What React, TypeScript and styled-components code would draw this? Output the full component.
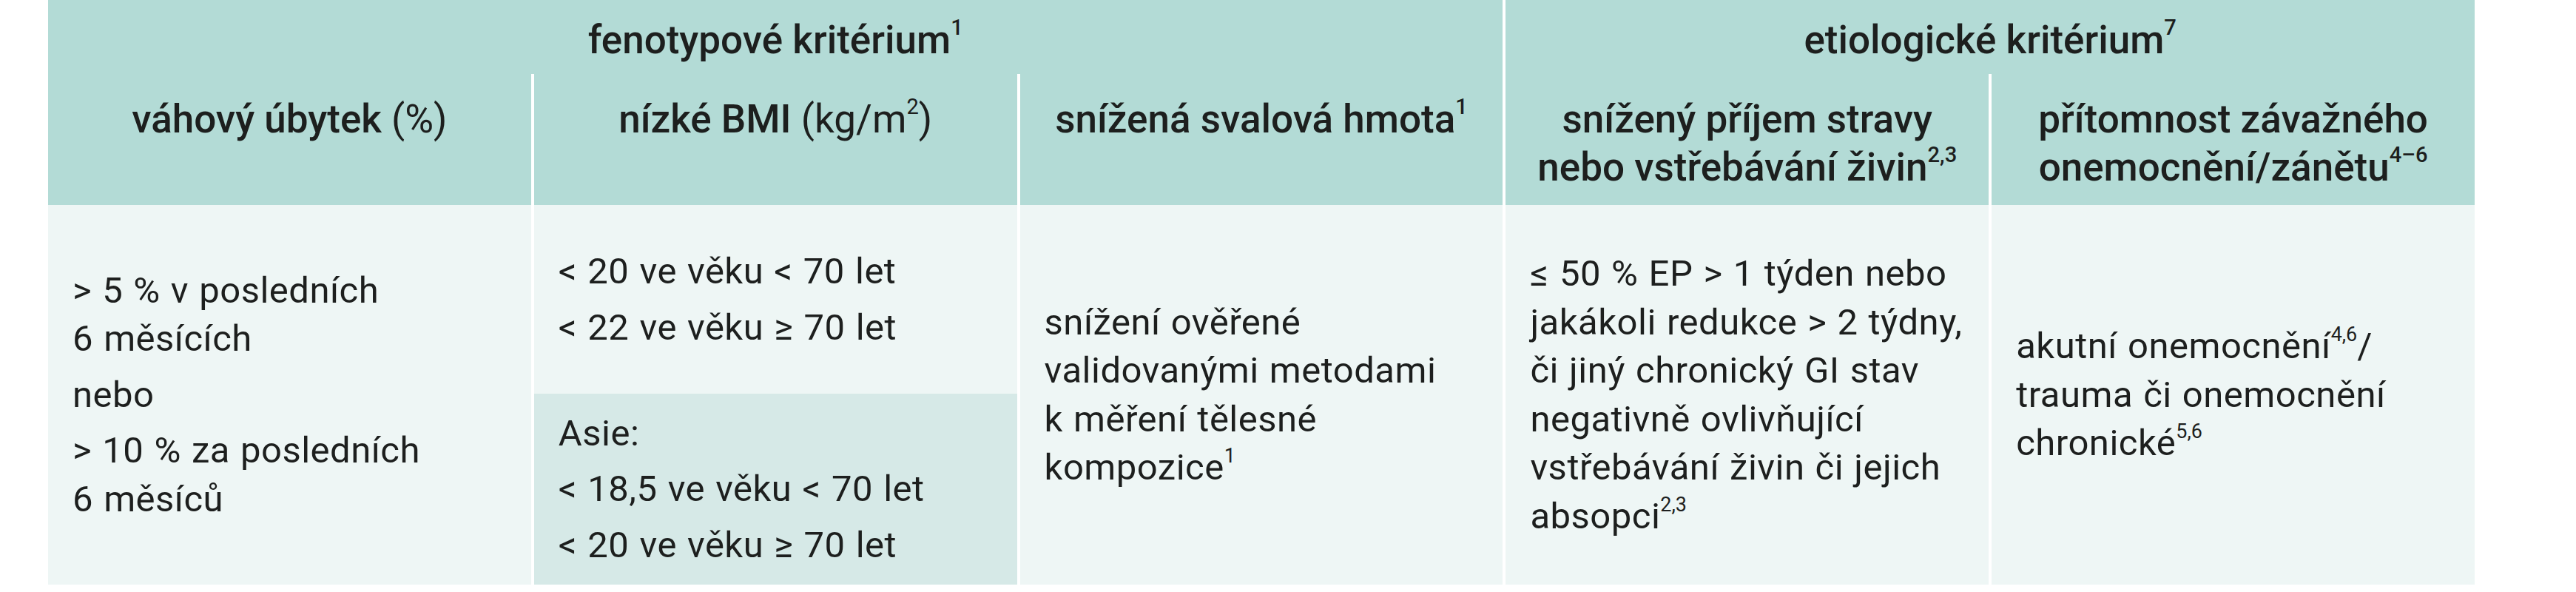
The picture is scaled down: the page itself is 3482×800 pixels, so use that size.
import React from "react";
import styled, { createGlobalStyle } from "styled-components";

const colors = {
  head: "#b3dbd6",
  body: "#eef6f5",
  bodyAlt: "#d6e9e7",
  text: "#1d1f1e",
  rule: "#ffffff",
};

const GlobalStyle = createGlobalStyle`
  html, body {
    margin: 0;
    padding: 0;
    background: #ffffff;
  }
  body {
    font-family: "Roboto", "Liberation Sans", sans-serif;
    color: ${colors.text};
  }
`;

const Page = styled.div`
  padding: 0 0 0 65px;
`;

const Table = styled.div`
  width: 3280px;
  display: grid;
  grid-template-columns: repeat(5, 1fr);
  grid-template-rows: 100px 177px 255px 258px;
  column-gap: 4px;
  background: ${colors.rule};
`;

const GroupHead = styled.div<{ $span: number }>`
  grid-column: span ${({ $span }) => $span};
  background: ${colors.head};
  text-align: center;
  padding-top: 22px;
  font-size: 53px;
  line-height: 65px;
  font-weight: 550;
  white-space: nowrap;
`;

const HeadCell = styled.div`
  background: ${colors.head};
  text-align: center;
  padding: 29px 12px 0;
  font-size: 53px;
  line-height: 65px;
  font-weight: 550;
  white-space: nowrap;
`;

const BodyCell = styled.div<{ $rows?: number; $alt?: boolean }>`
  grid-row: span ${({ $rows }) => $rows ?? 1};
  background: ${({ $alt }) => ($alt ? colors.bodyAlt : colors.body)};
  display: flex;
  flex-direction: column;
  justify-content: center;
  padding: 0 8px 0 33px;
  font-size: 49px;
  line-height: 65.5px;
  font-weight: 400;
  letter-spacing: 0.01em;
  word-spacing: 0.03em;
  white-space: nowrap;
`;

const Para = styled.p`
  margin: 0;

  & + & {
    margin-top: 10px;
  }
`;

const Sup = styled.sup`
  font-size: 0.55em;
  line-height: 0;
  vertical-align: 0.85em;
  letter-spacing: 0;
`;

const Plain = styled.span`
  font-weight: 400;
`;

export default function App() {
  return (
    <>
      <GlobalStyle />
      <Page>
        <Table>
          <GroupHead $span={3}>
            fenotypové kritérium<Sup>1</Sup>
          </GroupHead>
          <GroupHead $span={2}>
            etiologické kritérium<Sup>7</Sup>
          </GroupHead>

          <HeadCell>
            váhový úbytek <Plain>(%)</Plain>
          </HeadCell>
          <HeadCell>
            nízké BMI <Plain>(kg/m<Sup>2</Sup>)</Plain>
          </HeadCell>
          <HeadCell>
            snížená svalová hmota<Sup>1</Sup>
          </HeadCell>
          <HeadCell>
            snížený příjem stravy
            <br />
            nebo vstřebávání živin<Sup>2,3</Sup>
          </HeadCell>
          <HeadCell>
            přítomnost závažného
            <br />
            onemocnění/zánětu<Sup>4–6</Sup>
          </HeadCell>

          <BodyCell $rows={2}>
            <Para>
              &gt; 5 % v posledních
              <br />6 měsících
            </Para>
            <Para>nebo</Para>
            <Para>
              &gt; 10 % za posledních
              <br />6 měsíců
            </Para>
          </BodyCell>
          <BodyCell>
            <Para>&lt; 20 ve věku &lt; 70 let</Para>
            <Para>&lt; 22 ve věku ≥ 70 let</Para>
          </BodyCell>
          <BodyCell $rows={2}>
            <Para>
              snížení ověřené
              <br />
              validovanými metodami
              <br />k měření tělesné
              <br />
              kompozice<Sup>1</Sup>
            </Para>
          </BodyCell>
          <BodyCell $rows={2}>
            <Para>
              ≤ 50 % EP &gt; 1 týden nebo
              <br />
              jakákoli redukce &gt; 2 týdny,
              <br />
              či jiný chronický GI stav
              <br />
              negativně ovlivňující
              <br />
              vstřebávání živin či jejich
              <br />
              absopci<Sup>2,3</Sup>
            </Para>
          </BodyCell>
          <BodyCell $rows={2}>
            <Para>
              akutní onemocnění<Sup>4,6</Sup>/
              <br />
              trauma či onemocnění
              <br />
              chronické<Sup>5,6</Sup>
            </Para>
          </BodyCell>
          <BodyCell $alt>
            <Para>Asie:</Para>
            <Para>&lt; 18,5 ve věku &lt; 70 let</Para>
            <Para>&lt; 20 ve věku ≥ 70 let</Para>
          </BodyCell>
        </Table>
      </Page>
    </>
  );
}
